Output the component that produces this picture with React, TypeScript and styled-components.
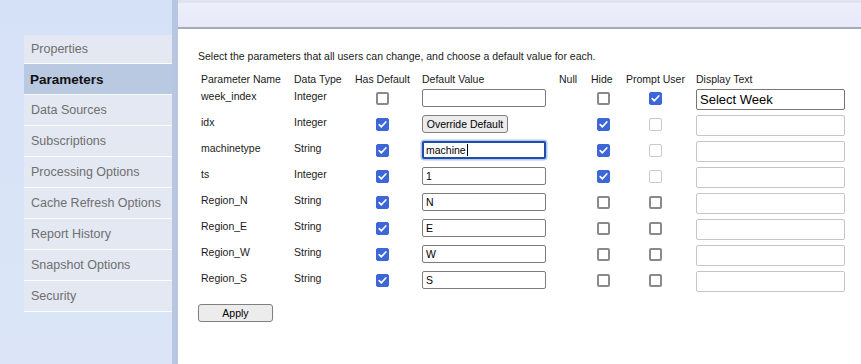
import React from "react";
import styled, { createGlobalStyle, css } from "styled-components";

const GlobalStyle = createGlobalStyle`
  html, body { margin: 0; padding: 0; }
  body { font-family: "Liberation Sans", Arial, sans-serif; background: #ffffff; }
  #root { width: 861px; height: 364px; overflow: hidden; }
`;

const Page = styled.div`
  display: flex;
  width: 861px;
  height: 364px;
`;

const Sidebar = styled.nav`
  width: 172px;
  flex: none;
  box-sizing: border-box;
  padding: 35px 0 0 24px;
  background: linear-gradient(180deg, #d5e1f7 0%, #d9e4f7 60%, #dbe5f7 100%);
  display: flex;
  flex-direction: column;
`;

const Divider = styled.div`
  width: 6px;
  flex: none;
  background: #b7c7e1;
`;

const NavItem = styled.div<{ $active?: boolean }>`
  height: 29px;
  flex: none;
  box-sizing: border-box;
  border-bottom: 1px solid #fbfcfe;
  display: flex;
  align-items: center;
  padding-left: 7px;
  font-size: 12.5px;
  color: #6f6f6f;
  background: #e3e8f2;
  ${(p) =>
    p.$active &&
    css`
      background: #b9c9e1;
      color: #111111;
      font-weight: bold;
      font-size: 13.5px;
      padding-left: 6px;
    `}
  & + & { height: 31px; }
`;

const Main = styled.main`
  flex: 1;
  display: flex;
  flex-direction: column;
  background: #ffffff;
`;

const TopBar = styled.div`
  height: 24px;
  flex: none;
  border-top: 3px solid #dfe3f0;
  border-bottom: 2px solid #a4acbc;
  background: linear-gradient(180deg, #eceefa 0%, #e7e9f8 100%);
`;

const Content = styled.section`
  padding: 21px 0 0 20px;
  display: flex;
  flex-direction: column;
  align-items: flex-start;
`;

const Intro = styled.p`
  margin: 0;
  font-size: 10.5px;
  line-height: 13px;
  color: #1a1a1a;
`;

const Grid = styled.div`
  margin: 10px 0 0 3px;
  display: grid;
  grid-template-columns: 93px 61px 67px 137px 32px 35px 70px 150px;
  grid-auto-rows: 26px;
  grid-template-rows: 16px;
`;

const HeadCell = styled.div`
  font-size: 10.5px;
  line-height: 13px;
  color: #1a1a1a;
  white-space: nowrap;
`;

const TextCell = styled.div`
  font-size: 10.5px;
  line-height: 13px;
  padding-top: 1px;
  color: #1a1a1a;
  white-space: nowrap;
`;

const Cell = styled.div<{ $indent?: number }>`
  position: relative;
  padding-left: ${(p) => p.$indent ?? 0}px;
`;

const Box = styled.span<{ $state: "on" | "off" | "disabled" }>`
  display: block;
  margin-top: 3px;
  width: 13px;
  height: 13px;
  box-sizing: border-box;
  border-radius: 2px;
  ${(p) =>
    p.$state === "on"
      ? css`
          background: #3d66d7;
          border: 1px solid #3d66d7;
        `
      : p.$state === "off"
      ? css`
          background: #ffffff;
          border: 2px solid #8a8a8a;
        `
      : css`
          background: #ffffff;
          border: 1px solid #c9c9c9;
        `}
  svg { display: block; }
`;

const ValueInput = styled.input<{ $focused?: boolean }>`
  display: block;
  width: 124px;
  height: 18px;
  box-sizing: border-box;
  margin: 0;
  border: 1px solid #7c7c7c;
  border-radius: 2px;
  padding: 0 3px;
  font-family: "Liberation Sans", Arial, sans-serif;
  font-size: 10.5px;
  color: #000000;
  background: #ffffff;
  outline: none;
  ${(p) =>
    p.$focused &&
    css`
      border: 2px solid #1f4ea6;
      padding: 0 2px;
      box-shadow: 0 0 0 1.5px #b3c9f2;
    `}
`;

const Caret = styled.span`
  position: absolute;
  left: 45px;
  top: 3px;
  width: 1px;
  height: 12px;
  background: #000000;
`;

const DisplayInput = styled.input`
  display: block;
  width: 149px;
  height: 21px;
  box-sizing: border-box;
  margin: 0;
  border: 1px solid #767676;
  border-radius: 2px;
  padding: 0 3px;
  font-family: "Liberation Sans", Arial, sans-serif;
  font-size: 13px;
  color: #000000;
  background: #ffffff;
  &:disabled { border-color: #c6c6c6; }
`;

const Button = styled.button<{ $width: number }>`
  display: block;
  width: ${(p) => p.$width}px;
  height: 18px;
  box-sizing: border-box;
  margin: 0;
  padding: 0;
  border: 1px solid #7f7f7f;
  border-radius: 3px;
  background: #ececec;
  font-family: "Liberation Sans", Arial, sans-serif;
  font-size: 10.5px;
  color: #000000;
`;

const ApplyRow = styled.div`
  margin-top: 7px;
`;

type Row = {
  name: string;
  type: string;
  hasDefault: boolean;
  value: string | null;
  focused?: boolean;
  hide: boolean;
  prompt: "on" | "off" | "disabled";
  display: string | null;
};

const rows: Row[] = [
  { name: "week_index", type: "Integer", hasDefault: false, value: "", hide: false, prompt: "on", display: "Select Week" },
  { name: "idx", type: "Integer", hasDefault: true, value: null, hide: true, prompt: "disabled", display: null },
  { name: "machinetype", type: "String", hasDefault: true, value: "machine", focused: true, hide: true, prompt: "disabled", display: null },
  { name: "ts", type: "Integer", hasDefault: true, value: "1", hide: true, prompt: "disabled", display: null },
  { name: "Region_N", type: "String", hasDefault: true, value: "N", hide: false, prompt: "off", display: null },
  { name: "Region_E", type: "String", hasDefault: true, value: "E", hide: false, prompt: "off", display: null },
  { name: "Region_W", type: "String", hasDefault: true, value: "W", hide: false, prompt: "off", display: null },
  { name: "Region_S", type: "String", hasDefault: true, value: "S", hide: false, prompt: "off", display: null },
];

const navItems = [
  "Properties",
  "Parameters",
  "Data Sources",
  "Subscriptions",
  "Processing Options",
  "Cache Refresh Options",
  "Report History",
  "Snapshot Options",
  "Security",
];

function Check({ state }: { state: "on" | "off" | "disabled" }) {
  return (
    <Box $state={state}>
      {state === "on" && (
        <svg width="11" height="11" viewBox="0 0 11 11">
          <path d="M2.2 5.6 L4.4 7.8 L8.8 3" fill="none" stroke="#ffffff" strokeWidth="1.7" strokeLinecap="round" strokeLinejoin="round" />
        </svg>
      )}
    </Box>
  );
}

export default function App() {
  return (
    <>
      <GlobalStyle />
      <Page>
        <Sidebar>
          {navItems.map((n) => (
            <NavItem key={n} $active={n === "Parameters"}>
              {n}
            </NavItem>
          ))}
        </Sidebar>
        <Divider />
        <Main>
          <TopBar />
          <Content>
            <Intro>Select the parameters that all users can change, and choose a default value for each.</Intro>
            <Grid>
              <HeadCell>Parameter Name</HeadCell>
              <HeadCell>Data Type</HeadCell>
              <HeadCell>Has Default</HeadCell>
              <HeadCell>Default Value</HeadCell>
              <HeadCell>Null</HeadCell>
              <HeadCell>Hide</HeadCell>
              <HeadCell>Prompt User</HeadCell>
              <HeadCell>Display Text</HeadCell>
              {rows.map((r) => (
                <React.Fragment key={r.name}>
                  <TextCell>{r.name}</TextCell>
                  <TextCell>{r.type}</TextCell>
                  <Cell $indent={21}>
                    <Check state={r.hasDefault ? "on" : "off"} />
                  </Cell>
                  <Cell>
                    {r.value === null ? (
                      <Button $width={86}>Override Default</Button>
                    ) : (
                      <ValueInput $focused={r.focused} defaultValue={r.value} readOnly />
                    )}
                    {r.focused && <Caret />}
                  </Cell>
                  <Cell />
                  <Cell $indent={6}>
                    <Check state={r.hide ? "on" : "off"} />
                  </Cell>
                  <Cell $indent={23}>
                    <Check state={r.prompt} />
                  </Cell>
                  <Cell>
                    {r.display !== null ? (
                      <DisplayInput defaultValue={r.display} readOnly />
                    ) : (
                      <DisplayInput disabled />
                    )}
                  </Cell>
                </React.Fragment>
              ))}
            </Grid>
            <ApplyRow>
              <Button $width={75}>Apply</Button>
            </ApplyRow>
          </Content>
        </Main>
      </Page>
    </>
  );
}
